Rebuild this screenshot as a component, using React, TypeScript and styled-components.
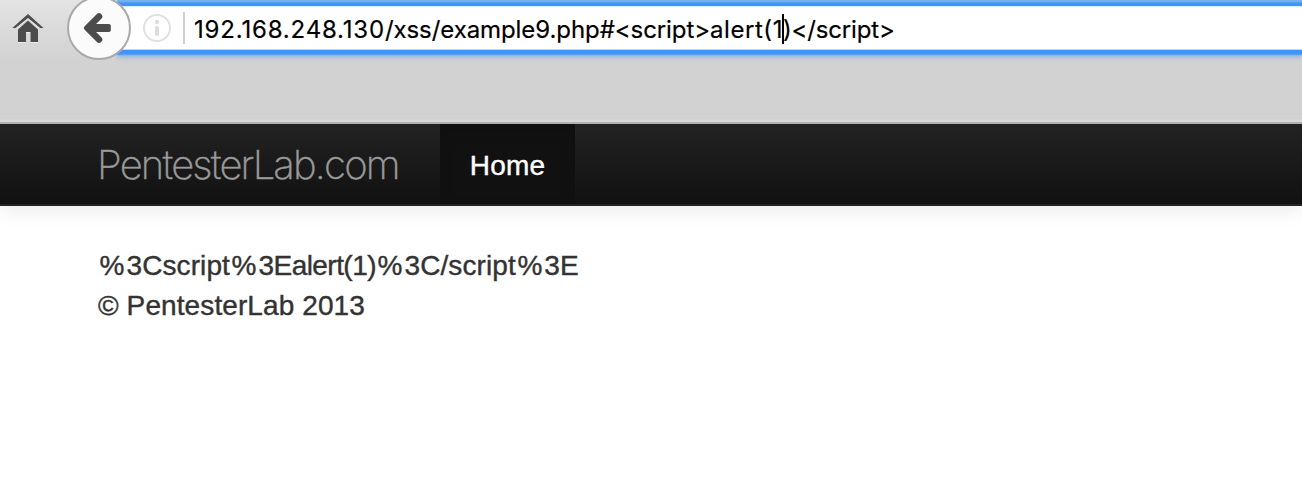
import React from 'react';
import styled, { createGlobalStyle } from 'styled-components';

const GlobalStyle = createGlobalStyle`
  * { box-sizing: border-box; }
  body { margin: 0; background: #fff; overflow: hidden; }
`;

const Page = styled.div`
  width: 100%;
  height: 488px;
  overflow: hidden;
  background: #fff;
`;

const Toolbar = styled.header`
  position: relative;
  z-index: 1;
  height: 124px;
  display: flex;
  align-items: flex-start;
  background: linear-gradient(#e4e4e4 0, #dadada 30px, #d2d2d2 62px, #d2d2d2 119px, #d8d8d8 120px);
  border-bottom: 2px solid #b0b0b0;
`;

const HomeButton = styled.div`
  width: 67px;
  flex: none;
  padding: 13px 0 0 12px;
  svg { display: block; }
`;

const BackButton = styled.div`
  position: relative;
  z-index: 1;
  flex: none;
  width: 64px;
  height: 64px;
  margin: -4px -14px 0 0;
  border: 2px solid #a9a9a9;
  border-radius: 50%;
  background: #fbfbfb;
  svg { display: block; }
`;

const AddressBar = styled.div`
  flex: 1;
  height: 54px;
  display: flex;
  align-items: center;
  padding: 0 0 0 25px;
  background: linear-gradient(#7fb4ec 0, #6aabf0 2px, #3f96f8 3px, #3f96f8 6px, #c2dffc 6px, #e8f4ff 7px, #fff 7px, #fff 49px, #b9dafc 49px, #b9dafc 50px, #3f96f8 50px, #3f96f8 54px);
  box-shadow: 0 1px 1px #5aa2f0, 0 3px 5px #86aedd;
`;

const InfoIcon = styled.svg`
  display: block;
  flex: none;
  margin-top: 2px;
`;

const Divider = styled.span`
  flex: none;
  width: 2px;
  height: 32px;
  margin: 2px 9px 0 11px;
  background: #d0d0d0;
`;

const Address = styled.span`
  display: flex;
  align-items: center;
  margin-top: 5px;
  font: 400 24px/32px Inter, sans-serif;
  -webkit-text-stroke: 0.2px #000;
  white-space: pre;
  color: #000;
`;

const Segment = styled.span<{ $spacing: number }>`
  letter-spacing: ${(p) => p.$spacing}px;
`;

const Caret = styled.i`
  width: 2px;
  height: 30px;
  margin: -2px -1px 0;
  background: #000;
`;

const Navbar = styled.nav`
  height: 82px;
  display: flex;
  padding-left: 97px;
  background: linear-gradient(#222, #111);
  border-bottom: 2px solid #252222;
  box-shadow: 0 2px 20px rgba(0, 0, 0, 0.1);
`;

const Brand = styled.a`
  width: 343px;
  font: 200 40px/82px Inter, sans-serif;
  letter-spacing: -1.83px;
  white-space: nowrap;
  -webkit-text-stroke: 0.4px #999;
  color: #999;
`;

const NavItem = styled.a`
  width: 135px;
  text-align: center;
  font: 400 28px/83px "Liberation Sans", sans-serif;
  letter-spacing: 0.2px;
  -webkit-text-stroke: 0.4px #fff;
  color: #fff;
  background: #111;
  box-shadow: inset 0 6px 16px rgba(0, 0, 0, 0.125);
`;

const Content = styled.main`
  padding: 40px 0 0 98px;
`;

const Line = styled.div`
  font: 400 28px/40px "Liberation Sans", sans-serif;
  letter-spacing: 0.1px;
  -webkit-text-stroke: 0.4px #333;
  color: #333;
  white-space: nowrap;
`;

const Percent = styled.span`
  margin-left: 1.6px;
  letter-spacing: 2px;
`;

export default function App() {
  return (
    <Page>
      <GlobalStyle />
      <Toolbar>
        <HomeButton>
          <svg width="32" height="30" viewBox="0 0 32 30">
            <path d="M6 19 16 9l10 10v11h-7.500v-10h-5v10H6z" fill="#eee" />
            <path d="M6 16.500 16 7.500l10 9V29h-7.500V19h-4.500v10H6z" fill="#4c4c4c" />
            <path d="M.3 15 16 1 31.500 15h-3.300L16 5 3.600 15z" fill="#4c4c4c" />
            <path d="M4.500 15.800 16 6l11.500 9.800" fill="none" stroke="#dedede" strokeWidth="1.300" />
          </svg>
        </HomeButton>
        <BackButton>
          <svg width="60" height="60" viewBox="0 0 60 60">
            <path d="M18.500 30 30 18.500M18.500 30 30 41.500" stroke="#4c4c4c" strokeWidth="6.600" strokeLinecap="round" />
            <path d="M14.600 30 20 24.500 24 26H40q1.800 0 1.800 1.800v4.400q0 1.800-1.800 1.800H24l-4 1.500z" fill="#4c4c4c" />
          </svg>
        </BackButton>
        <AddressBar>
          <InfoIcon width="30" height="30" viewBox="0 0 30 30">
            <circle cx="15" cy="15" r="13" fill="none" stroke="#e1e1e1" strokeWidth="2" />
            <circle cx="15" cy="9" r="2.200" fill="#dcdcdc" />
            <path d="M15 15v6" stroke="#dcdcdc" strokeWidth="4" strokeLinecap="round" />
          </InfoIcon>
          <Divider />
          <Address>
            <Segment $spacing={0.82}>192.168.248.130</Segment>
            <Segment $spacing={-0.08}>/xss/example9.php#&lt;script&gt;</Segment>
            <Segment $spacing={0.55}>alert(1</Segment>
            <Caret />
            <Segment $spacing={-0.15}>)&lt;/script&gt;</Segment>
          </Address>
        </AddressBar>
      </Toolbar>
      <Navbar>
        <Brand>PentesterLab.com</Brand>
        <NavItem>Home</NavItem>
      </Navbar>
      <Content>
        <Line>
          <Percent>%</Percent>3Cscript<Percent>%</Percent><Segment $spacing={-0.55}>3Ealert(1)</Segment><Percent>%</Percent>3C/script<Percent>%</Percent>3E
        </Line>
        <Line>© PentesterLab 2013</Line>
      </Content>
    </Page>
  );
}
